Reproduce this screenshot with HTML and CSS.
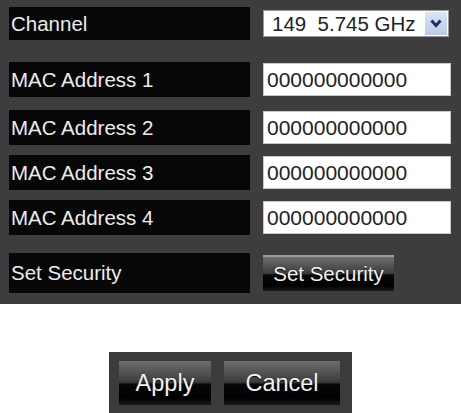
FILE: index.html
```html
<!DOCTYPE html>
<html lang="en">
  <head>
    <meta charset="UTF-8" />
    <meta name="viewport" content="width=device-width, initial-scale=1.0" />
    <title>Wireless Settings</title>
    <link rel="stylesheet" href="styles.css">
  </head>
  <body>
    <div class="panel">
      <!-- Kanał -->
      <div class="row row-channel">
        <div class="label">Channel</div>
        <div class="select-wrap">
          <select class="select">
            <option selected>149&nbsp;&nbsp;5.745 GHz</option>
            <option>153&nbsp;&nbsp;5.765 GHz</option>
            <option>157&nbsp;&nbsp;5.785 GHz</option>
          </select>
          <span class="select-arrow">
            <svg width="12" height="9" viewBox="0 0 12 9">
              <polyline points="1.5,1.5 6,6.5 10.5,1.5" fill="none" stroke="#1f2f5c" stroke-width="3" />
            </svg>
          </span>
        </div>
      </div>

      <!-- Adresy MAC -->
      <div class="row row-mac row-first">
        <div class="label">MAC Address 1</div>
        <input class="text-input" type="text" value="000000000000" />
      </div>
      <div class="row row-mac row-second">
        <div class="label">MAC Address 2</div>
        <input class="text-input" type="text" value="000000000000" />
      </div>
      <div class="row row-mac">
        <div class="label">MAC Address 3</div>
        <input class="text-input" type="text" value="000000000000" />
      </div>
      <div class="row row-mac">
        <div class="label">MAC Address 4</div>
        <input class="text-input" type="text" value="000000000000" />
      </div>

      <!-- Zabezpieczenia -->
      <div class="row row-security">
        <div class="label">Set Security</div>
        <button class="btn btn-security">Set Security</button>
      </div>
    </div>

    <div class="actions">
      <button class="btn btn-apply">Apply</button>
      <button class="btn btn-cancel">Cancel</button>
    </div>
  </body>
</html>
```

FILE: styles.css
```css
body {
  font-family: "Liberation Sans", Arial, sans-serif;
  background: #fff;
  margin: 0;
}

.panel {
  background: #3d3d3d;
  padding: 7px 9px 11px 9px;
}

.row {
  display: flex;
  gap: 13px;
  align-items: center;
  height: 35px;
  margin-top: 10px;
}

.row-channel {
  height: 33px;
  margin-top: 0;
}

.row-first {
  margin-top: 22px;
}

.row-second {
  margin-top: 13px;
}

.row-security {
  height: 40px;
  margin-top: 18px;
}

.label {
  width: 239px;
  height: 100%;
  padding-left: 2px;
  display: flex;
  align-items: center;
  background: #070707;
  color: #ececec;
  font-size: 20.5px;
}

.select-wrap {
  display: flex;
  width: 184px;
  height: 25px;
  border: 1px solid #9a9a9a;
  background: #fff;
}

.select {
  flex: 1;
  appearance: none;
  -webkit-appearance: none;
  border: none;
  outline: none;
  background: transparent;
  font-family: inherit;
  font-size: 20.5px;
  color: #222;
  padding: 0 0 0 8px;
  margin: 0;
}

.select-arrow {
  width: 22px;
  margin: 1px;
  display: flex;
  align-items: center;
  justify-content: center;
  background: linear-gradient(#dbe5f6, #b9cbe9);
}

.text-input {
  width: 183px;
  height: 31px;
  box-sizing: content-box;
  margin: 0;
  padding: 0 0 0 3px;
  border: 1px solid #c8c8c8;
  background: #fff;
  font-family: inherit;
  font-size: 21px;
  color: #222;
  outline: none;
}

.btn {
  font-family: inherit;
  color: #f2f2f2;
  border: none;
  padding: 0;
  margin: 0;
  cursor: pointer;
  text-shadow: 0 1px 1px #000;
  background: linear-gradient(#6e6e6e 0%, #3c3c3c 48%, #080808 53%, #000 85%, #1c1c1c 100%);
}

.btn-security {
  width: 131px;
  height: 36px;
  font-size: 20.5px;
  border-top: 2px solid #9c9c9c;
}

.actions {
  width: 221px;
  margin: 48px auto 0 auto;
  padding: 9px 12px 9px 10px;
  display: flex;
  gap: 13px;
  background: #3b3b3b;
}

.btn-apply,
.btn-cancel {
  height: 44px;
  font-size: 23.5px;
}

.btn-apply {
  width: 92px;
}

.btn-cancel {
  width: 116px;
}
```
